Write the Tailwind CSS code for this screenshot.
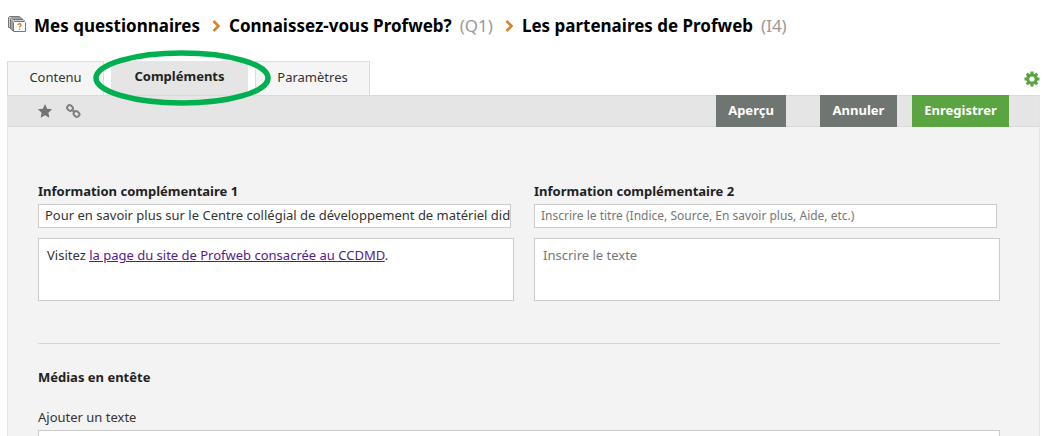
<!DOCTYPE html>
<html lang="fr">
<head>
    <meta charset="UTF-8">
    <meta name="viewport" content="width=device-width, initial-scale=1.0">
    <title>Les partenaires de Profweb</title>
    <script src="https://cdn.jsdelivr.net/npm/@tailwindcss/browser@4"></script>
</head>
<body class="flex flex-col h-screen overflow-hidden bg-white font-['Noto_Sans','Open_Sans',sans-serif] text-[13px] leading-5 text-[#333]">
    <!-- Fil d'Ariane -->
    <nav class="flex items-center shrink-0 pl-2 pt-3 h-10 text-[17px] leading-7 text-black whitespace-nowrap" aria-label="Fil d'Ariane">
        <svg class="w-[18px] h-4 mr-2 mb-1 shrink-0" viewBox="0 0 18 16" fill="#ccc" stroke="#777">
            <path d="M.5 11.500v-10l1-1h10l1 1v10z"/>
            <path d="M2.500 13v-10l1-1h10l1 1v10z"/>
            <path d="M4 14.500v-10l1-1h10l1 1v10z"/>
            <path d="M5.500 15.500v-9l1-1h10l1 1v9z" fill="#fff"/>
            <path d="M10 9c0-1.700 3-1.700 3 0 0 1.200-1.500 1-1.500 2.500M11.500 12.700v1.300" fill="none" stroke="#e87722" stroke-width="1.300"/>
        </svg>
        <a href="#" class="font-bold">Mes questionnaires</a>
        <svg class="w-[9px] h-3 ml-3 mr-2 shrink-0" viewBox="0 0 9 12" fill="none" stroke="#d5812e" stroke-width="2.600"><path d="M1.500 1l5 5-5 5"/></svg>
        <a href="#" class="font-bold">Connaissez-vous Profweb?</a>
        <span class="ml-2 text-[#999]">(Q1)</span>
        <svg class="w-[9px] h-3 ml-3 mr-2 shrink-0" viewBox="0 0 9 12" fill="none" stroke="#d5812e" stroke-width="2.600"><path d="M1.500 1l5 5-5 5"/></svg>
        <a href="#" class="font-bold">Les partenaires de Profweb</a>
        <span class="ml-2 text-[#999]">(I4)</span>
    </nav>

    <!-- Onglets -->
    <div class="flex items-end shrink-0 mt-[21px] ml-[7px] mr-[6px] h-[34px]">
        <button class="h-full w-[97px] pb-1 border border-b-0 border-[#ddd] bg-[#f5f5f5]">Contenu</button>
        <div class="relative h-full mx-[7px]">
            <button class="h-full w-[137px] pb-1 bg-[#e5e5e5] font-bold text-[#222]">Compléments</button>
            <svg class="absolute -left-[18px] -top-[11px] w-[178px] h-14 pointer-events-none" viewBox="0 0 178 56" fill="none" stroke="#00b050" stroke-width="5.500"><ellipse cx="89" cy="28" rx="86" ry="25"/></svg>
        </div>
        <button class="h-full w-[115px] pb-1 border border-b-0 border-[#ddd] bg-[#f5f5f5]">Paramètres</button>
        <button class="ml-auto mb-2" aria-label="Réglages">
            <svg class="w-4 h-4" viewBox="0 0 16 16" fill="none" stroke="#5aa441">
                <circle cx="8" cy="8" r="4.200" stroke-width="3.200"/>
                <path d="M8 .5v3M8 12.500v3M.5 8h3M12.500 8h3M2.700 2.700l2 2M11.300 11.300l2 2M2.700 13.300l2-2M11.300 4.700l2-2" stroke-width="3"/>
            </svg>
        </button>
    </div>

    <main class="flex-1 min-h-0 overflow-hidden ml-[7px] mr-[6px] border-x border-[#e3e3e3] bg-[#f3f3f3]">
        <!-- Barre d'outils -->
        <div class="flex items-center h-8 pl-[29px] pr-[30px] border-y border-[#dadada] bg-[#e5e5e5]">
            <button aria-label="Favori">
                <svg class="w-4 h-4" viewBox="0 0 16 16" fill="#6f7672"><path d="M8 1l2.100 4.700 5 .6-3.700 3.400 1 5L8 12.200l-4.400 2.500 1-5L.9 6.300l5-.6z"/></svg>
            </button>
            <button class="ml-3" aria-label="Lien">
                <svg class="w-4 h-4" viewBox="0 0 16 16" fill="none" stroke="#7b817e" stroke-width="2">
                    <rect x="2" y="2.500" width="6" height="5" rx="2.500" transform="rotate(40 5 5)"/>
                    <rect x="8.500" y="8.500" width="6" height="5" rx="2.500" transform="rotate(40 11.500 11)"/>
                    <path d="M6.500 6.500l3.500 3"/>
                </svg>
            </button>
            <div class="flex ml-auto font-bold text-white">
                <button class="h-8 w-[70px] pb-[2px] mr-[34px] bg-[#6f7672]">Aperçu</button>
                <button class="h-8 w-[77px] pb-[2px] mr-[15px] bg-[#6f7672]">Annuler</button>
                <button class="h-8 w-[97px] pb-[2px] bg-[#5aa441]">Enregistrer</button>
            </div>
        </div>

        <form class="pl-[30px] pr-[39px] pt-[54px]">
            <div class="flex gap-5">
                <div class="flex-1">
                    <label for="titre1" class="block font-bold text-[#222]">Information complémentaire 1</label>
                    <div class="pr-[3px] mt-[3px]">
                        <input id="titre1" type="text" value="Pour en savoir plus sur le Centre collégial de développement de matériel didactique" class="block w-full h-6 pl-[6px] pb-[2px] border border-[#ccc] bg-white">
                    </div>
                    <div contenteditable="true" role="textbox" aria-label="Texte 1" class="mt-[10px] h-[63px] px-2 py-[6px] border border-[#ccc] bg-white">Visitez <a href="#" class="text-[#551a8b] underline">la page du site de Profweb consacrée au CCDMD</a>.</div>
                </div>
                <div class="w-[466px]">
                    <label for="titre2" class="block font-bold text-[#222]">Information complémentaire 2</label>
                    <div class="pr-[3px] mt-[3px]">
                        <input id="titre2" type="text" placeholder="Inscrire le titre (Indice, Source, En savoir plus, Aide, etc.)" class="block w-full h-6 pl-[6px] pb-[2px] border border-[#ccc] bg-white text-[12px] placeholder:text-[#777]">
                    </div>
                    <textarea aria-label="Texte 2" placeholder="Inscrire le texte" class="block mt-[10px] w-full h-[63px] px-2 py-[6px] border border-[#ccc] bg-white resize-none placeholder:text-[#777]"></textarea>
                </div>
            </div>

            <hr class="mt-[42px] border-[#d5d5d5]">

            <h2 class="mt-[23px] font-bold text-[#222]">Médias en entête</h2>
            <label for="entete" class="block mt-5">Ajouter un texte</label>
            <textarea id="entete" class="block mt-[3px] w-full h-16 border border-[#ccc] bg-white resize-none"></textarea>
        </form>
    </main>
</body>
</html>
